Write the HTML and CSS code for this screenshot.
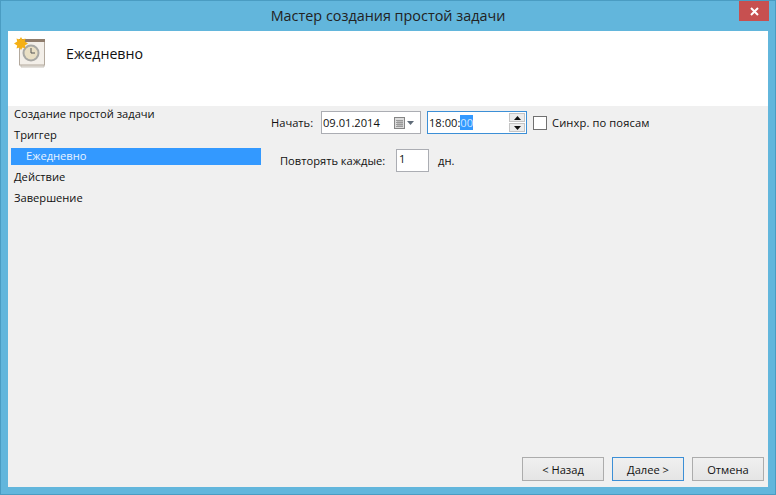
FILE: index.html
```html
<!DOCTYPE html>
<html lang="ru">
<head>
<meta charset="utf-8">
<title>Мастер создания простой задачи</title>
<link rel="stylesheet" href="styles.css">
</head>
<body>
<div class="window">
  <div class="titlebar">
    <div class="title">Мастер создания простой задачи</div>
    <div class="close"><svg width="9" height="9" viewBox="0 0 9 9"><path d="M1 1 L8 8 M8 1 L1 8" stroke="#fff" stroke-width="2" fill="none"/></svg></div>
  </div>
  <div class="client">
    <div class="header">
      <svg class="task-icon" width="32" height="31" viewBox="0 0 32 31">
        <path d="M7 28 V30 H30 V28" fill="#e8e4de" stroke="#c9c4bc"/>
        <rect x="5.5" y="2.5" width="25" height="25.5" fill="#f3efe9" stroke="#b3a99d"/>
        <rect x="5" y="2" width="26" height="3" fill="#8f7d6d"/>
        <circle cx="17" cy="16" r="8.5" fill="#a8a8a4"/>
        <circle cx="17" cy="16" r="6.5" fill="#e9dfc4"/>
        <path d="M17 11 V16 H21" stroke="#555" stroke-width="1" fill="none"/>
        <path d="M7 0 L8.4 2.6 L11.5 1.5 L10.8 4.4 L14 6.5 L10.8 8.4 L11.5 11.5 L8.4 10.4 L7 13 L5.5 10.4 L2.5 11.5 L3.2 8.4 L0 6.5 L3.2 4.4 L2.5 1.5 L5.5 2.6 Z" fill="#f5b015"/>
      </svg>
      <div class="heading">Ежедневно</div>
    </div>
    <div class="body">
      <div class="main">
        <nav class="nav">
          <div class="nav-item">Создание простой задачи</div>
          <div class="nav-item">Триггер</div>
          <div class="nav-item nav-current">Ежедневно</div>
          <div class="nav-item">Действие</div>
          <div class="nav-item">Завершение</div>
        </nav>
        <div class="form">
          <div class="row row-start">
            <span class="label-start">Начать:</span>
            <div class="field field-date">
              <span>09.01.2014</span>
              <svg class="cal" width="21" height="12" viewBox="0 0 21 12">
                <rect x="0.5" y="0.5" width="10" height="11" fill="#dcdcdc" stroke="#858585"/>
                <path d="M2 3.5 H9 M2 5.5 H9 M2 7.5 H9 M2 9.5 H9 M4 3 V10 M6 3 V10 M8 3 V10" stroke="#9a9a9a" stroke-width="1" fill="none"/>
                <path d="M13 4 H20 L16.5 8 Z" fill="#5f6b78"/>
              </svg>
            </div>
            <div class="field field-time">
              <span>18:00:<span class="sel">00</span></span>
              <div class="spin">
                <div class="spin-btn"><svg width="7" height="4" viewBox="0 0 7 4"><path d="M0 4 L3.5 0 L7 4 Z" fill="#111"/></svg></div>
                <div class="spin-btn"><svg width="7" height="4" viewBox="0 0 7 4"><path d="M0 0 L3.5 4 L7 0 Z" fill="#111"/></svg></div>
              </div>
            </div>
            <div class="check"></div>
            <span class="sync">Синхр. по поясам</span>
          </div>
          <div class="row row-repeat">
            <span class="label-repeat">Повторять каждые:</span>
            <div class="field field-num">1</div>
            <span class="unit">дн.</span>
          </div>
        </div>
      </div>
      <div class="footer">
        <button class="btn">&lt; Назад</button>
        <button class="btn btn-default">Далее &gt;</button>
        <button class="btn">Отмена</button>
      </div>
    </div>
  </div>
</div>
</body>
</html>
```
FILE: styles.css
```css
* { box-sizing: border-box; }
html, body { margin: 0; padding: 0; }
body {
  width: 776px;
  height: 495px;
  overflow: hidden;
  font-family: "Open Sans", "Noto Sans", sans-serif;
  font-size: 11.15px;
  color: #111;
}
.window {
  width: 776px;
  height: 495px;
  background: #62b6dc;
  border: 1px solid #4a9cc2;
  display: flex;
  flex-direction: column;
  padding: 0 7px 7px;
}
.titlebar {
  height: 30px;
  flex: none;
  display: flex;
  align-items: flex-start;
  justify-content: center;
  position: relative;
}
.title {
  font-size: 14.4px;
  line-height: 30px;
  color: #222;
}
.close {
  position: absolute;
  right: -1px;
  top: 0;
  width: 30px;
  height: 20px;
  background: #c75050;
  display: flex;
  align-items: center;
  justify-content: center;
}
.client {
  flex: 1;
  display: flex;
  flex-direction: column;
}
.header {
  height: 75px;
  flex: none;
  background: #fff;
  display: flex;
  align-items: flex-start;
  padding: 6px 0 0 6px;
}
.task-icon { flex: none; }
.heading {
  font-size: 14.2px;
  line-height: 20px;
  margin: 7px 0 0 20px;
}
.body {
  flex: 1;
  background: #f0f0f0;
  display: flex;
  flex-direction: column;
}
.main {
  flex: 1;
  display: flex;
}
.nav {
  width: 253px;
  flex: none;
  padding: 0 0 0 3px;
  margin-top: -3px;
}
.nav-item {
  height: 21px;
  line-height: 21px;
  padding-left: 3px;
}
.nav-item:nth-child(3) {
  margin: 3px 0 1px;
  height: 17px;
  line-height: 15px;
  padding-left: 15px;
}
.nav-current {
  background: #3399ff;
  color: #e8f3ff;
}
.form {
  flex: 1;
  padding: 5px 0 0 10px;
}
.row {
  display: flex;
  align-items: center;
}
.label-start { width: 50px; }
.sync { letter-spacing: 0.12px; }
.field {
  height: 23px;
  background: #fff;
  border: 1px solid #abadb3;
  display: flex;
  align-items: center;
  padding-left: 1px;
}
.field-date {
  width: 100px;
  justify-content: space-between;
  padding-right: 5px;
}
.field-time {
  width: 100px;
  margin-left: 6px;
  border-color: #3c8fd6;
  justify-content: space-between;
  padding-right: 1px;
}
.sel { background: #3399ff; color: #cfe6ff; }
.spin {
  width: 16px;
  display: flex;
  flex-direction: column;
  gap: 1px;
}
.spin-btn {
  height: 9px;
  background: #ececec;
  border: 1px solid #c4c4c4;
  display: flex;
  align-items: center;
  justify-content: center;
}
.check {
  width: 14px;
  height: 14px;
  background: #fff;
  border: 1px solid #707070;
  margin: 0 5px 0 6px;
}
.row-repeat {
  margin-top: 15px;
  padding-left: 9px;
}
.label-repeat { width: 116px; flex: none; }
.field-num {
  width: 33px;
  align-items: flex-start;
  line-height: 18px;
  padding-left: 2px;
}
.unit { margin-left: 9px; }
.footer {
  height: 30px;
  flex: none;
  display: flex;
  justify-content: flex-end;
  gap: 8px;
  padding-right: 4px;
  align-items: flex-start;
}
.btn {
  width: 82px;
  height: 24px;
  font: inherit;
  color: #111;
  background: linear-gradient(#f0f0f0, #e5e5e5);
  border: 1px solid #acacac;
  padding: 0;
}
.btn:nth-child(n+2) { width: 72px; }
.btn-default { border-color: #3c8fd6; }
```
